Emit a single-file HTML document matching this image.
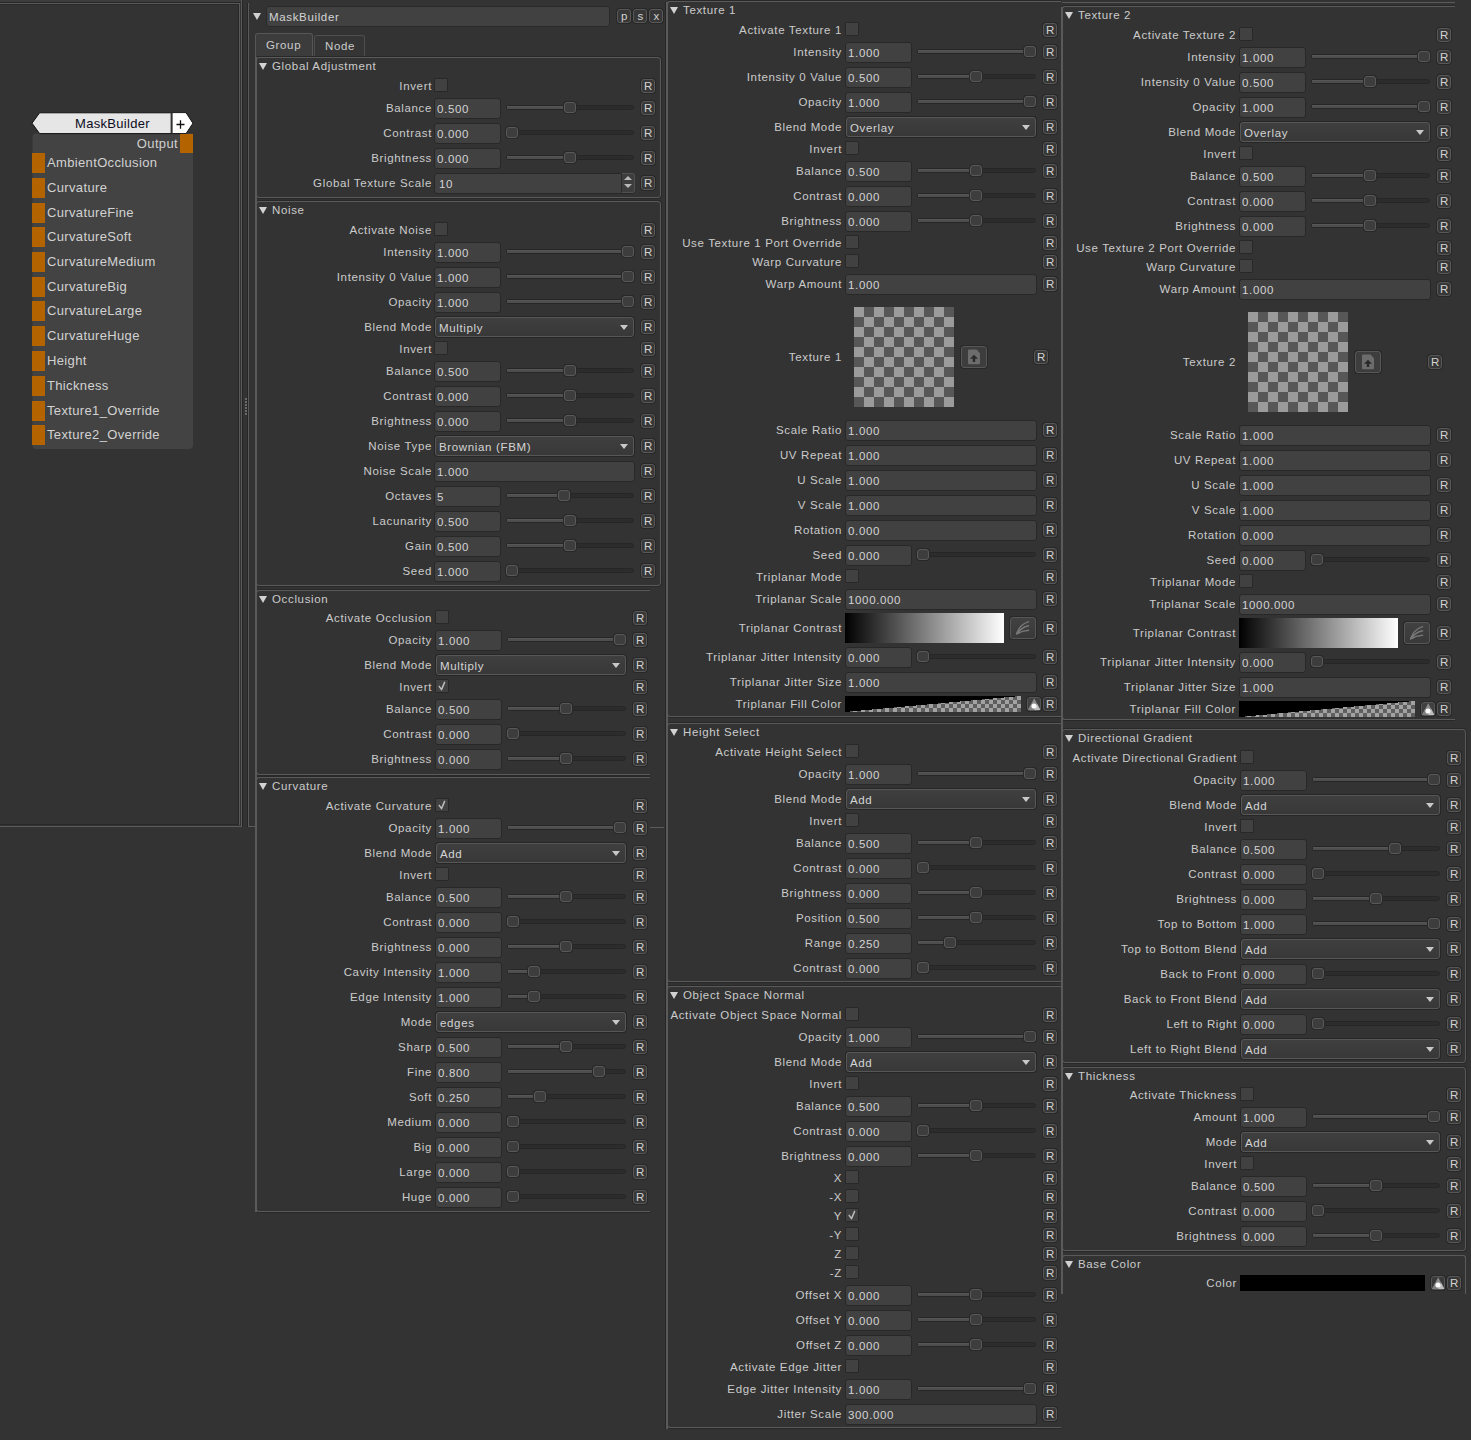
<!DOCTYPE html><html><head><meta charset="utf-8"><style>
*{margin:0;padding:0;box-sizing:border-box}
html,body{width:1471px;height:1440px;overflow:hidden;background:#333333}
body{position:relative;font-family:"Liberation Sans",sans-serif}
body>div{position:absolute}
.a{position:absolute}
.t{position:absolute;font-size:11.5px;line-height:20px;height:20px;letter-spacing:.65px;color:#cbcbcb;white-space:nowrap}
.rb{position:absolute;width:14px;height:14px;border:1px solid #585858;border-radius:3px;background:#373737;box-shadow:0 0 0 1px #282828;font-size:11.5px;line-height:13px;text-align:center;color:#d2d2d2;padding-left:.5px}
.cb{position:absolute;width:14px;height:14px;background:#414141;border:1px solid #282828;border-radius:1px}
.fd{position:absolute;height:21px;background:#414141;border:1px solid #282828;border-radius:3px}
.fd span,.dd span{position:absolute;left:2px;top:0px;font-size:11.5px;line-height:20px;letter-spacing:.65px;color:#d4d4d4;white-space:nowrap}
.dd{position:absolute;height:20px;background:linear-gradient(#3f3f3f,#383838);border:1px solid #575757;border-radius:3px;box-shadow:0 0 0 1px #262626}
.dd span{left:3px;top:0px}
.dd i{position:absolute;right:5px;top:7px;width:0;height:0;border-left:4.5px solid transparent;border-right:4.5px solid transparent;border-top:5px solid #c8c8c8}
.gr{position:absolute;height:5px;background:#2c2c2c;border:1px solid #262626;border-radius:3px}
.gf{position:absolute;height:3px;background:#4e4e4e;border-top:1px solid #565656}
.hd{position:absolute;width:12px;height:11px;background:#3d3d3d;border:1px solid #595959;border-radius:3px;box-shadow:0 0 0 1px #282828}
.gb{position:absolute;border:1px solid #5a5a5a;border-radius:3px;box-shadow:0 0 0 1px #282828}
.tri{position:absolute;width:0;height:0;border-left:4px solid transparent;border-right:4px solid transparent;border-top:7px solid #d2d2d2}
.spn{position:absolute;width:14px;height:20px;border:1px solid #505050;border-left:1px solid #2a2a2a;border-radius:0 3px 3px 0;background:#3d3d3d}
.spn b{position:absolute;left:2px;top:2px;border-left:4px solid transparent;border-right:4px solid transparent;border-bottom:4px solid #b8b8b8}
.spn s{position:absolute;left:2px;top:10px;border-left:4px solid transparent;border-right:4px solid transparent;border-top:4px solid #b8b8b8}
.port{position:absolute;background:#b36400}
</style></head><body>
<div class="a" style="left:0px;top:0px;width:241px;height:3px;background:#3d3d3d"></div>
<div class="a" style="left:0px;top:2px;width:241px;height:1px;background:#262626"></div>
<div class="a" style="left:0px;top:3px;width:240px;height:1px;background:#5a5a5a"></div>
<div class="a" style="left:0px;top:4px;width:239px;height:1px;background:#282828"></div>
<div class="a" style="left:239px;top:3px;width:1px;height:822px;background:#5a5a5a"></div>
<div class="a" style="left:238px;top:4px;width:1px;height:820px;background:#282828"></div>
<div class="a" style="left:0px;top:824px;width:239px;height:1px;background:#282828"></div>
<div class="a" style="left:0px;top:826px;width:242px;height:1px;background:#5a5a5a"></div>
<div class="a" style="left:241px;top:0px;width:1px;height:827px;background:#5a5a5a"></div>
<div class="a" style="left:242px;top:0px;width:1px;height:827px;background:#262626"></div>
<div class="a" style="left:248px;top:3px;width:1px;height:824px;background:#5a5a5a"></div>
<div class="a" style="left:247px;top:3px;width:1px;height:824px;background:#262626"></div>
<div class="a" style="left:248px;top:826px;width:9px;height:1px;background:#5a5a5a"></div>
<div class="a" style="left:245px;top:398px;width:2px;height:2px;background:#6a6a6a"></div>
<div class="a" style="left:245px;top:401px;width:2px;height:2px;background:#6a6a6a"></div>
<div class="a" style="left:245px;top:404px;width:2px;height:2px;background:#6a6a6a"></div>
<div class="a" style="left:245px;top:407px;width:2px;height:2px;background:#6a6a6a"></div>
<div class="a" style="left:245px;top:410px;width:2px;height:2px;background:#6a6a6a"></div>
<div class="a" style="left:245px;top:413px;width:2px;height:2px;background:#6a6a6a"></div>
<svg class="a" style="position:absolute;left:0;top:0" width="240" height="460"><path d="M32.5 137 Q32.5 133.5 36 133.5 L193 133.5 L193 445 Q193 449 189 449 L36 449 Q32.5 449 32.5 445 Z" fill="#434343"/><path d="M32 123.2 L39.6 112.8 L186 112.8 L192.8 123.2 L186 133.6 L39.6 133.6 Z" fill="#e6e6e6" stroke="#111" stroke-width="1"/><path d="M172.5 113.3 L185.7 113.3 L192.2 123.2 L185.7 133.1 L172.5 133.1 Z" fill="#ffffff"/><rect x="170.6" y="113" width="2" height="20.5" fill="#333"/><path d="M176.5 124.5 L184.5 124.5 M180.5 120.3 L180.5 128.7" stroke="#111" stroke-width="1.3"/></svg>
<div class="t" style="left:75px;top:114px;font-size:13px;letter-spacing:0.3px;color:#0c0c1c">MaskBuilder</div>
<div class="port" style="left:180px;top:134px;width:13px;height:19px;"></div>
<div class="t" style="right:1293px;top:134px;font-size:13px;letter-spacing:0.35px;color:#cfcfcf">Output</div>
<div class="port" style="left:32px;top:153px;width:13px;height:20px;"></div>
<div class="t" style="left:47px;top:153px;font-size:13px;letter-spacing:0.35px;color:#d2d2d2">AmbientOcclusion</div>
<div class="port" style="left:32px;top:178px;width:13px;height:20px;"></div>
<div class="t" style="left:47px;top:178px;font-size:13px;letter-spacing:0.35px;color:#d2d2d2">Curvature</div>
<div class="port" style="left:32px;top:203px;width:13px;height:20px;"></div>
<div class="t" style="left:47px;top:203px;font-size:13px;letter-spacing:0.35px;color:#d2d2d2">CurvatureFine</div>
<div class="port" style="left:32px;top:227px;width:13px;height:20px;"></div>
<div class="t" style="left:47px;top:227px;font-size:13px;letter-spacing:0.35px;color:#d2d2d2">CurvatureSoft</div>
<div class="port" style="left:32px;top:252px;width:13px;height:20px;"></div>
<div class="t" style="left:47px;top:252px;font-size:13px;letter-spacing:0.35px;color:#d2d2d2">CurvatureMedium</div>
<div class="port" style="left:32px;top:277px;width:13px;height:20px;"></div>
<div class="t" style="left:47px;top:277px;font-size:13px;letter-spacing:0.35px;color:#d2d2d2">CurvatureBig</div>
<div class="port" style="left:32px;top:301px;width:13px;height:20px;"></div>
<div class="t" style="left:47px;top:301px;font-size:13px;letter-spacing:0.35px;color:#d2d2d2">CurvatureLarge</div>
<div class="port" style="left:32px;top:326px;width:13px;height:20px;"></div>
<div class="t" style="left:47px;top:326px;font-size:13px;letter-spacing:0.35px;color:#d2d2d2">CurvatureHuge</div>
<div class="port" style="left:32px;top:351px;width:13px;height:20px;"></div>
<div class="t" style="left:47px;top:351px;font-size:13px;letter-spacing:0.35px;color:#d2d2d2">Height</div>
<div class="port" style="left:32px;top:376px;width:13px;height:20px;"></div>
<div class="t" style="left:47px;top:376px;font-size:13px;letter-spacing:0.35px;color:#d2d2d2">Thickness</div>
<div class="port" style="left:32px;top:401px;width:13px;height:20px;"></div>
<div class="t" style="left:47px;top:401px;font-size:13px;letter-spacing:0.35px;color:#d2d2d2">Texture1_Override</div>
<div class="port" style="left:32px;top:425px;width:13px;height:20px;"></div>
<div class="t" style="left:47px;top:425px;font-size:13px;letter-spacing:0.35px;color:#d2d2d2">Texture2_Override</div>
<div class="tri" style="left:253px;top:13px"></div>
<div class="fd" style="left:266px;top:6px;width:344px;background:#414141;border-color:#2a2a2a"><span style="left:2px;top:0px">MaskBuilder</span></div>
<div class="rb" style="left:617px;top:9px;line-height:12px">p</div>
<div class="rb" style="left:633px;top:9px;line-height:12px">s</div>
<div class="rb" style="left:649px;top:9px;line-height:12px">x</div>
<div class="a" style="left:255px;top:33px;width:58px;height:24px;background:#3c3c3c;border:1px solid #565656;border-bottom:none;border-radius:3px 3px 0 0"></div>
<div class="a" style="left:314px;top:35px;width:51px;height:21px;background:#353535;border:1px solid #4e4e4e;border-bottom:none;border-radius:3px 3px 0 0"></div>
<div class="t" style="left:266px;top:35px;">Group</div>
<div class="t" style="left:325px;top:36px;">Node</div>
<div class="gb" style="left:256px;top:57px;width:405px;height:141px;"></div>
<div class="tri" style="left:259px;top:63px"></div>
<div class="t" style="left:272px;top:56px;">Global Adjustment</div>
<div class="t" style="right:1039px;top:76px;">Invert</div>
<div class="cb" style="left:434px;top:78px"></div>
<div class="rb" style="left:641px;top:79px">R</div>
<div class="t" style="right:1039px;top:98px;">Balance</div>
<div class="fd" style="left:434px;top:98px;width:67px"><span>0.500</span></div>
<div class="gr" style="left:506px;top:105px;width:128px"></div>
<div class="gf" style="left:507px;top:106px;width:58px"></div>
<div class="hd" style="left:564px;top:102px"></div>
<div class="rb" style="left:641px;top:101px">R</div>
<div class="t" style="right:1039px;top:123px;">Contrast</div>
<div class="fd" style="left:434px;top:123px;width:67px"><span>0.000</span></div>
<div class="gr" style="left:506px;top:130px;width:128px"></div>
<div class="hd" style="left:506px;top:127px"></div>
<div class="rb" style="left:641px;top:126px">R</div>
<div class="t" style="right:1039px;top:148px;">Brightness</div>
<div class="fd" style="left:434px;top:148px;width:67px"><span>0.000</span></div>
<div class="gr" style="left:506px;top:155px;width:128px"></div>
<div class="gf" style="left:507px;top:156px;width:58px"></div>
<div class="hd" style="left:564px;top:152px"></div>
<div class="rb" style="left:641px;top:151px">R</div>
<div class="t" style="right:1039px;top:173px;">Global Texture Scale</div>
<div class="fd" style="left:434px;top:173px;width:201px"><span style="left:4px">10</span></div>
<div class="spn" style="left:621px;top:173px"><b></b><s></s></div>
<div class="rb" style="left:641px;top:176px">R</div>
<div class="gb" style="left:256px;top:201px;width:405px;height:385px;"></div>
<div class="tri" style="left:259px;top:207px"></div>
<div class="t" style="left:272px;top:200px;">Noise</div>
<div class="t" style="right:1039px;top:220px;">Activate Noise</div>
<div class="cb" style="left:434px;top:222px"></div>
<div class="rb" style="left:641px;top:223px">R</div>
<div class="t" style="right:1039px;top:242px;">Intensity</div>
<div class="fd" style="left:434px;top:242px;width:67px"><span>1.000</span></div>
<div class="gr" style="left:506px;top:249px;width:128px"></div>
<div class="gf" style="left:507px;top:250px;width:116px"></div>
<div class="hd" style="left:622px;top:246px"></div>
<div class="rb" style="left:641px;top:245px">R</div>
<div class="t" style="right:1039px;top:267px;">Intensity 0 Value</div>
<div class="fd" style="left:434px;top:267px;width:67px"><span>1.000</span></div>
<div class="gr" style="left:506px;top:274px;width:128px"></div>
<div class="gf" style="left:507px;top:275px;width:116px"></div>
<div class="hd" style="left:622px;top:271px"></div>
<div class="rb" style="left:641px;top:270px">R</div>
<div class="t" style="right:1039px;top:292px;">Opacity</div>
<div class="fd" style="left:434px;top:292px;width:67px"><span>1.000</span></div>
<div class="gr" style="left:506px;top:299px;width:128px"></div>
<div class="gf" style="left:507px;top:300px;width:116px"></div>
<div class="hd" style="left:622px;top:296px"></div>
<div class="rb" style="left:641px;top:295px">R</div>
<div class="t" style="right:1039px;top:317px;">Blend Mode</div>
<div class="dd" style="left:435px;top:317px;width:199px"><span>Multiply</span><i></i></div>
<div class="rb" style="left:641px;top:320px">R</div>
<div class="t" style="right:1039px;top:339px;">Invert</div>
<div class="cb" style="left:434px;top:341px"></div>
<div class="rb" style="left:641px;top:342px">R</div>
<div class="t" style="right:1039px;top:361px;">Balance</div>
<div class="fd" style="left:434px;top:361px;width:67px"><span>0.500</span></div>
<div class="gr" style="left:506px;top:368px;width:128px"></div>
<div class="gf" style="left:507px;top:369px;width:58px"></div>
<div class="hd" style="left:564px;top:365px"></div>
<div class="rb" style="left:641px;top:364px">R</div>
<div class="t" style="right:1039px;top:386px;">Contrast</div>
<div class="fd" style="left:434px;top:386px;width:67px"><span>0.000</span></div>
<div class="gr" style="left:506px;top:393px;width:128px"></div>
<div class="gf" style="left:507px;top:394px;width:58px"></div>
<div class="hd" style="left:564px;top:390px"></div>
<div class="rb" style="left:641px;top:389px">R</div>
<div class="t" style="right:1039px;top:411px;">Brightness</div>
<div class="fd" style="left:434px;top:411px;width:67px"><span>0.000</span></div>
<div class="gr" style="left:506px;top:418px;width:128px"></div>
<div class="gf" style="left:507px;top:419px;width:58px"></div>
<div class="hd" style="left:564px;top:415px"></div>
<div class="rb" style="left:641px;top:414px">R</div>
<div class="t" style="right:1039px;top:436px;">Noise Type</div>
<div class="dd" style="left:435px;top:436px;width:199px"><span>Brownian (FBM)</span><i></i></div>
<div class="rb" style="left:641px;top:439px">R</div>
<div class="t" style="right:1039px;top:461px;">Noise Scale</div>
<div class="fd" style="left:434px;top:461px;width:201px"><span>1.000</span></div>
<div class="rb" style="left:641px;top:464px">R</div>
<div class="t" style="right:1039px;top:486px;">Octaves</div>
<div class="fd" style="left:434px;top:486px;width:67px"><span>5</span></div>
<div class="gr" style="left:506px;top:493px;width:128px"></div>
<div class="gf" style="left:507px;top:494px;width:52px"></div>
<div class="hd" style="left:558px;top:490px"></div>
<div class="rb" style="left:641px;top:489px">R</div>
<div class="t" style="right:1039px;top:511px;">Lacunarity</div>
<div class="fd" style="left:434px;top:511px;width:67px"><span>0.500</span></div>
<div class="gr" style="left:506px;top:518px;width:128px"></div>
<div class="gf" style="left:507px;top:519px;width:58px"></div>
<div class="hd" style="left:564px;top:515px"></div>
<div class="rb" style="left:641px;top:514px">R</div>
<div class="t" style="right:1039px;top:536px;">Gain</div>
<div class="fd" style="left:434px;top:536px;width:67px"><span>0.500</span></div>
<div class="gr" style="left:506px;top:543px;width:128px"></div>
<div class="gf" style="left:507px;top:544px;width:58px"></div>
<div class="hd" style="left:564px;top:540px"></div>
<div class="rb" style="left:641px;top:539px">R</div>
<div class="t" style="right:1039px;top:561px;">Seed</div>
<div class="fd" style="left:434px;top:561px;width:67px"><span>1.000</span></div>
<div class="gr" style="left:506px;top:568px;width:128px"></div>
<div class="hd" style="left:506px;top:565px"></div>
<div class="rb" style="left:641px;top:564px">R</div>
<div class="gb" style="left:256px;top:590px;width:394px;height:185px;border-right:none;border-top-right-radius:0;border-bottom-right-radius:0;box-shadow:-1px 0 0 0 #282828,0 -1px 0 0 #282828,0 1px 0 0 #282828;"></div>
<div class="tri" style="left:259px;top:596px"></div>
<div class="t" style="left:272px;top:589px;">Occlusion</div>
<div class="t" style="right:1039px;top:608px;">Activate Occlusion</div>
<div class="cb" style="left:435px;top:610px"></div>
<div class="rb" style="left:633px;top:611px">R</div>
<div class="t" style="right:1039px;top:630px;">Opacity</div>
<div class="fd" style="left:435px;top:630px;width:67px"><span>1.000</span></div>
<div class="gr" style="left:507px;top:637px;width:119px"></div>
<div class="gf" style="left:508px;top:638px;width:107px"></div>
<div class="hd" style="left:614px;top:634px"></div>
<div class="rb" style="left:633px;top:633px">R</div>
<div class="t" style="right:1039px;top:655px;">Blend Mode</div>
<div class="dd" style="left:436px;top:655px;width:190px"><span>Multiply</span><i></i></div>
<div class="rb" style="left:633px;top:658px">R</div>
<div class="t" style="right:1039px;top:677px;">Invert</div>
<div class="cb" style="left:435px;top:679px"><svg width="12" height="12" style="position:absolute;left:0px;top:0px"><path d="M3.2 6.4 L5.5 9.6 L8.6 2.4" stroke="#bcbcbc" stroke-width="1.5" fill="none" stroke-linecap="round" stroke-linejoin="round"/></svg></div>
<div class="rb" style="left:633px;top:680px">R</div>
<div class="t" style="right:1039px;top:699px;">Balance</div>
<div class="fd" style="left:435px;top:699px;width:67px"><span>0.500</span></div>
<div class="gr" style="left:507px;top:706px;width:119px"></div>
<div class="gf" style="left:508px;top:707px;width:53px"></div>
<div class="hd" style="left:560px;top:703px"></div>
<div class="rb" style="left:633px;top:702px">R</div>
<div class="t" style="right:1039px;top:724px;">Contrast</div>
<div class="fd" style="left:435px;top:724px;width:67px"><span>0.000</span></div>
<div class="gr" style="left:507px;top:731px;width:119px"></div>
<div class="hd" style="left:507px;top:728px"></div>
<div class="rb" style="left:633px;top:727px">R</div>
<div class="t" style="right:1039px;top:749px;">Brightness</div>
<div class="fd" style="left:435px;top:749px;width:67px"><span>0.000</span></div>
<div class="gr" style="left:507px;top:756px;width:119px"></div>
<div class="gf" style="left:508px;top:757px;width:53px"></div>
<div class="hd" style="left:560px;top:753px"></div>
<div class="rb" style="left:633px;top:752px">R</div>
<div class="gb" style="left:256px;top:777px;width:394px;height:435px;border-right:none;border-top-right-radius:0;border-bottom-right-radius:0;box-shadow:-1px 0 0 0 #282828,0 -1px 0 0 #282828,0 1px 0 0 #282828;"></div>
<div class="tri" style="left:259px;top:783px"></div>
<div class="t" style="left:272px;top:776px;">Curvature</div>
<div class="t" style="right:1039px;top:796px;">Activate Curvature</div>
<div class="cb" style="left:435px;top:798px"><svg width="12" height="12" style="position:absolute;left:0px;top:0px"><path d="M3.2 6.4 L5.5 9.6 L8.6 2.4" stroke="#bcbcbc" stroke-width="1.5" fill="none" stroke-linecap="round" stroke-linejoin="round"/></svg></div>
<div class="rb" style="left:633px;top:799px">R</div>
<div class="t" style="right:1039px;top:818px;">Opacity</div>
<div class="fd" style="left:435px;top:818px;width:67px"><span>1.000</span></div>
<div class="gr" style="left:507px;top:825px;width:119px"></div>
<div class="gf" style="left:508px;top:826px;width:107px"></div>
<div class="hd" style="left:614px;top:822px"></div>
<div class="rb" style="left:633px;top:821px">R</div>
<div class="t" style="right:1039px;top:843px;">Blend Mode</div>
<div class="dd" style="left:436px;top:843px;width:190px"><span>Add</span><i></i></div>
<div class="rb" style="left:633px;top:846px">R</div>
<div class="t" style="right:1039px;top:865px;">Invert</div>
<div class="cb" style="left:435px;top:867px"></div>
<div class="rb" style="left:633px;top:868px">R</div>
<div class="t" style="right:1039px;top:887px;">Balance</div>
<div class="fd" style="left:435px;top:887px;width:67px"><span>0.500</span></div>
<div class="gr" style="left:507px;top:894px;width:119px"></div>
<div class="gf" style="left:508px;top:895px;width:53px"></div>
<div class="hd" style="left:560px;top:891px"></div>
<div class="rb" style="left:633px;top:890px">R</div>
<div class="t" style="right:1039px;top:912px;">Contrast</div>
<div class="fd" style="left:435px;top:912px;width:67px"><span>0.000</span></div>
<div class="gr" style="left:507px;top:919px;width:119px"></div>
<div class="hd" style="left:507px;top:916px"></div>
<div class="rb" style="left:633px;top:915px">R</div>
<div class="t" style="right:1039px;top:937px;">Brightness</div>
<div class="fd" style="left:435px;top:937px;width:67px"><span>0.000</span></div>
<div class="gr" style="left:507px;top:944px;width:119px"></div>
<div class="gf" style="left:508px;top:945px;width:53px"></div>
<div class="hd" style="left:560px;top:941px"></div>
<div class="rb" style="left:633px;top:940px">R</div>
<div class="t" style="right:1039px;top:962px;">Cavity Intensity</div>
<div class="fd" style="left:435px;top:962px;width:67px"><span>1.000</span></div>
<div class="gr" style="left:507px;top:969px;width:119px"></div>
<div class="gf" style="left:508px;top:970px;width:21px"></div>
<div class="hd" style="left:528px;top:966px"></div>
<div class="rb" style="left:633px;top:965px">R</div>
<div class="t" style="right:1039px;top:987px;">Edge Intensity</div>
<div class="fd" style="left:435px;top:987px;width:67px"><span>1.000</span></div>
<div class="gr" style="left:507px;top:994px;width:119px"></div>
<div class="gf" style="left:508px;top:995px;width:21px"></div>
<div class="hd" style="left:528px;top:991px"></div>
<div class="rb" style="left:633px;top:990px">R</div>
<div class="t" style="right:1039px;top:1012px;">Mode</div>
<div class="dd" style="left:436px;top:1012px;width:190px"><span>edges</span><i></i></div>
<div class="rb" style="left:633px;top:1015px">R</div>
<div class="t" style="right:1039px;top:1037px;">Sharp</div>
<div class="fd" style="left:435px;top:1037px;width:67px"><span>0.500</span></div>
<div class="gr" style="left:507px;top:1044px;width:119px"></div>
<div class="gf" style="left:508px;top:1045px;width:53px"></div>
<div class="hd" style="left:560px;top:1041px"></div>
<div class="rb" style="left:633px;top:1040px">R</div>
<div class="t" style="right:1039px;top:1062px;">Fine</div>
<div class="fd" style="left:435px;top:1062px;width:67px"><span>0.800</span></div>
<div class="gr" style="left:507px;top:1069px;width:119px"></div>
<div class="gf" style="left:508px;top:1070px;width:86px"></div>
<div class="hd" style="left:593px;top:1066px"></div>
<div class="rb" style="left:633px;top:1065px">R</div>
<div class="t" style="right:1039px;top:1087px;">Soft</div>
<div class="fd" style="left:435px;top:1087px;width:67px"><span>0.250</span></div>
<div class="gr" style="left:507px;top:1094px;width:119px"></div>
<div class="gf" style="left:508px;top:1095px;width:27px"></div>
<div class="hd" style="left:534px;top:1091px"></div>
<div class="rb" style="left:633px;top:1090px">R</div>
<div class="t" style="right:1039px;top:1112px;">Medium</div>
<div class="fd" style="left:435px;top:1112px;width:67px"><span>0.000</span></div>
<div class="gr" style="left:507px;top:1119px;width:119px"></div>
<div class="hd" style="left:507px;top:1116px"></div>
<div class="rb" style="left:633px;top:1115px">R</div>
<div class="t" style="right:1039px;top:1137px;">Big</div>
<div class="fd" style="left:435px;top:1137px;width:67px"><span>0.000</span></div>
<div class="gr" style="left:507px;top:1144px;width:119px"></div>
<div class="hd" style="left:507px;top:1141px"></div>
<div class="rb" style="left:633px;top:1140px">R</div>
<div class="t" style="right:1039px;top:1162px;">Large</div>
<div class="fd" style="left:435px;top:1162px;width:67px"><span>0.000</span></div>
<div class="gr" style="left:507px;top:1169px;width:119px"></div>
<div class="hd" style="left:507px;top:1166px"></div>
<div class="rb" style="left:633px;top:1165px">R</div>
<div class="t" style="right:1039px;top:1187px;">Huge</div>
<div class="fd" style="left:435px;top:1187px;width:67px"><span>0.000</span></div>
<div class="gr" style="left:507px;top:1194px;width:119px"></div>
<div class="hd" style="left:507px;top:1191px"></div>
<div class="rb" style="left:633px;top:1190px">R</div>
<div class="a" style="left:650px;top:827px;width:14px;height:1px;background:#5a5a5a"></div>
<div class="gb" style="left:667px;top:1px;width:394px;height:716px;border-right:none;border-top-right-radius:0;border-bottom-right-radius:0;box-shadow:-1px 0 0 0 #282828,0 -1px 0 0 #282828,0 1px 0 0 #282828;"></div>
<div class="tri" style="left:670px;top:7px"></div>
<div class="t" style="left:683px;top:0px;">Texture 1</div>
<div class="t" style="right:629px;top:20px;">Activate Texture 1</div>
<div class="cb" style="left:845px;top:22px"></div>
<div class="rb" style="left:1043px;top:23px">R</div>
<div class="t" style="right:629px;top:42px;">Intensity</div>
<div class="fd" style="left:845px;top:42px;width:67px"><span>1.000</span></div>
<div class="gr" style="left:917px;top:49px;width:119px"></div>
<div class="gf" style="left:918px;top:50px;width:107px"></div>
<div class="hd" style="left:1024px;top:46px"></div>
<div class="rb" style="left:1043px;top:45px">R</div>
<div class="t" style="right:629px;top:67px;">Intensity 0 Value</div>
<div class="fd" style="left:845px;top:67px;width:67px"><span>0.500</span></div>
<div class="gr" style="left:917px;top:74px;width:119px"></div>
<div class="gf" style="left:918px;top:75px;width:53px"></div>
<div class="hd" style="left:970px;top:71px"></div>
<div class="rb" style="left:1043px;top:70px">R</div>
<div class="t" style="right:629px;top:92px;">Opacity</div>
<div class="fd" style="left:845px;top:92px;width:67px"><span>1.000</span></div>
<div class="gr" style="left:917px;top:99px;width:119px"></div>
<div class="gf" style="left:918px;top:100px;width:107px"></div>
<div class="hd" style="left:1024px;top:96px"></div>
<div class="rb" style="left:1043px;top:95px">R</div>
<div class="t" style="right:629px;top:117px;">Blend Mode</div>
<div class="dd" style="left:846px;top:117px;width:190px"><span>Overlay</span><i></i></div>
<div class="rb" style="left:1043px;top:120px">R</div>
<div class="t" style="right:629px;top:139px;">Invert</div>
<div class="cb" style="left:845px;top:141px"></div>
<div class="rb" style="left:1043px;top:142px">R</div>
<div class="t" style="right:629px;top:161px;">Balance</div>
<div class="fd" style="left:845px;top:161px;width:67px"><span>0.500</span></div>
<div class="gr" style="left:917px;top:168px;width:119px"></div>
<div class="gf" style="left:918px;top:169px;width:53px"></div>
<div class="hd" style="left:970px;top:165px"></div>
<div class="rb" style="left:1043px;top:164px">R</div>
<div class="t" style="right:629px;top:186px;">Contrast</div>
<div class="fd" style="left:845px;top:186px;width:67px"><span>0.000</span></div>
<div class="gr" style="left:917px;top:193px;width:119px"></div>
<div class="gf" style="left:918px;top:194px;width:53px"></div>
<div class="hd" style="left:970px;top:190px"></div>
<div class="rb" style="left:1043px;top:189px">R</div>
<div class="t" style="right:629px;top:211px;">Brightness</div>
<div class="fd" style="left:845px;top:211px;width:67px"><span>0.000</span></div>
<div class="gr" style="left:917px;top:218px;width:119px"></div>
<div class="gf" style="left:918px;top:219px;width:53px"></div>
<div class="hd" style="left:970px;top:215px"></div>
<div class="rb" style="left:1043px;top:214px">R</div>
<div class="t" style="right:629px;top:233px;">Use Texture 1 Port Override</div>
<div class="cb" style="left:845px;top:235px"></div>
<div class="rb" style="left:1043px;top:236px">R</div>
<div class="t" style="right:629px;top:252px;">Warp Curvature</div>
<div class="cb" style="left:845px;top:254px"></div>
<div class="rb" style="left:1043px;top:255px">R</div>
<div class="t" style="right:629px;top:274px;">Warp Amount</div>
<div class="fd" style="left:845px;top:274px;width:192px"><span>1.000</span></div>
<div class="rb" style="left:1043px;top:277px">R</div>
<div class="a" style="left:854px;top:307px;width:100px;height:100px;background:conic-gradient(#575757 25%,#9b9b9b 0 50%,#575757 0 75%,#9b9b9b 0) 0 0/20px 20px"></div>
<div class="t" style="right:629px;top:347px;">Texture 1</div>
<div class="a" style="left:961px;top:346px;width:26px;height:22px;background:#3d3d3d;border:1px solid #575757;border-radius:3px;box-shadow:0 0 0 1px #282828"><svg width="24" height="20" style="position:absolute;left:0;top:0"><path d="M7 2.6 L14.6 2.6 L18 6.2 L18 16.2 Q18 17.2 17 17.2 L7 17.2 Q6 17.2 6 16.2 L6 3.6 Q6 2.6 7 2.6 Z" fill="#6c6c6c"/><path d="M12 7.8 L8 11.8 L10.8 11.8 L10.8 15 L13.2 15 L13.2 11.8 L16 11.8 Z" fill="#2a2a2a"/></svg></div>
<div class="rb" style="left:1034px;top:350px">R</div>
<div class="t" style="right:629px;top:420px;">Scale Ratio</div>
<div class="fd" style="left:845px;top:420px;width:192px"><span>1.000</span></div>
<div class="rb" style="left:1043px;top:423px">R</div>
<div class="t" style="right:629px;top:445px;">UV Repeat</div>
<div class="fd" style="left:845px;top:445px;width:192px"><span>1.000</span></div>
<div class="rb" style="left:1043px;top:448px">R</div>
<div class="t" style="right:629px;top:470px;">U Scale</div>
<div class="fd" style="left:845px;top:470px;width:192px"><span>1.000</span></div>
<div class="rb" style="left:1043px;top:473px">R</div>
<div class="t" style="right:629px;top:495px;">V Scale</div>
<div class="fd" style="left:845px;top:495px;width:192px"><span>1.000</span></div>
<div class="rb" style="left:1043px;top:498px">R</div>
<div class="t" style="right:629px;top:520px;">Rotation</div>
<div class="fd" style="left:845px;top:520px;width:192px"><span>0.000</span></div>
<div class="rb" style="left:1043px;top:523px">R</div>
<div class="t" style="right:629px;top:545px;">Seed</div>
<div class="fd" style="left:845px;top:545px;width:67px"><span>0.000</span></div>
<div class="gr" style="left:917px;top:552px;width:119px"></div>
<div class="hd" style="left:917px;top:549px"></div>
<div class="rb" style="left:1043px;top:548px">R</div>
<div class="t" style="right:629px;top:567px;">Triplanar Mode</div>
<div class="cb" style="left:845px;top:569px"></div>
<div class="rb" style="left:1043px;top:570px">R</div>
<div class="t" style="right:629px;top:589px;">Triplanar Scale</div>
<div class="fd" style="left:845px;top:589px;width:192px"><span>1000.000</span></div>
<div class="rb" style="left:1043px;top:592px">R</div>
<div class="t" style="right:629px;top:618px;">Triplanar Contrast</div>
<div class="a" style="left:845px;top:613px;width:159px;height:30px;background:linear-gradient(to right,#000 0%,#fff 100%)"></div>
<div class="a" style="left:1010px;top:617px;width:26px;height:22px;background:linear-gradient(#414141,#393939);border:1px solid #575757;border-radius:3px;box-shadow:0 0 0 1px #282828"><svg width="24" height="20" style="position:absolute;left:0;top:0"><path d="M5.6 16 Q8.5 6.5 17.6 3.6 M5.6 16 Q10.5 9.2 17.6 7.8 M5.6 16 Q11 12.6 17.6 12.2" stroke="#777" stroke-width="1.4" fill="none" stroke-linecap="round"/><path d="M4.8 16.6 L6.2 13 L8.6 15.4 Z" fill="#777"/></svg></div>
<div class="rb" style="left:1043px;top:621px">R</div>
<div class="t" style="right:629px;top:647px;">Triplanar Jitter Intensity</div>
<div class="fd" style="left:845px;top:647px;width:67px"><span>0.000</span></div>
<div class="gr" style="left:917px;top:654px;width:119px"></div>
<div class="hd" style="left:917px;top:651px"></div>
<div class="rb" style="left:1043px;top:650px">R</div>
<div class="t" style="right:629px;top:672px;">Triplanar Jitter Size</div>
<div class="fd" style="left:845px;top:672px;width:192px"><span>1.000</span></div>
<div class="rb" style="left:1043px;top:675px">R</div>
<div class="t" style="right:629px;top:694px;">Triplanar Fill Color</div>
<svg class="a" style="position:absolute;left:845px;top:696px" width="176" height="16"><defs><pattern id="ck1" x="4" width="8" height="8" patternUnits="userSpaceOnUse"><rect width="8" height="8" fill="#5e5e5e"/><rect width="4" height="4" fill="#a2a2a2"/><rect x="4" y="4" width="4" height="4" fill="#a2a2a2"/></pattern></defs><rect width="176" height="16" fill="#000"/><path d="M0 16 L176 0 L176 16 Z" fill="url(#ck1)" shape-rendering="crispEdges"/></svg>
<div class="a" style="left:1027px;top:697px;width:14px;height:14px;background:#404040;border:1px solid #575757;border-radius:3px;box-shadow:0 0 0 1px #282828"><svg width="14" height="14" style="position:absolute;left:-1px;top:-1px"><path d="M7.2 1.2 L13.4 13 L1 13 Z" fill="#8c8c8c"/><path d="M4.1 7.1 L1 13 L7.2 13 Z" fill="#808080"/><path d="M10.3 7.1 L13.4 13 L7.2 13 Z" fill="#bdbdbd"/><circle cx="7" cy="9" r="2.6" fill="#fafafa"/></svg></div>
<div class="rb" style="left:1043px;top:697px">R</div>
<div class="gb" style="left:667px;top:723px;width:394px;height:259px;border-right:none;border-top-right-radius:0;border-bottom-right-radius:0;box-shadow:-1px 0 0 0 #282828,0 -1px 0 0 #282828,0 1px 0 0 #282828;"></div>
<div class="tri" style="left:670px;top:729px"></div>
<div class="t" style="left:683px;top:722px;">Height Select</div>
<div class="t" style="right:629px;top:742px;">Activate Height Select</div>
<div class="cb" style="left:845px;top:744px"></div>
<div class="rb" style="left:1043px;top:745px">R</div>
<div class="t" style="right:629px;top:764px;">Opacity</div>
<div class="fd" style="left:845px;top:764px;width:67px"><span>1.000</span></div>
<div class="gr" style="left:917px;top:771px;width:119px"></div>
<div class="gf" style="left:918px;top:772px;width:107px"></div>
<div class="hd" style="left:1024px;top:768px"></div>
<div class="rb" style="left:1043px;top:767px">R</div>
<div class="t" style="right:629px;top:789px;">Blend Mode</div>
<div class="dd" style="left:846px;top:789px;width:190px"><span>Add</span><i></i></div>
<div class="rb" style="left:1043px;top:792px">R</div>
<div class="t" style="right:629px;top:811px;">Invert</div>
<div class="cb" style="left:845px;top:813px"></div>
<div class="rb" style="left:1043px;top:814px">R</div>
<div class="t" style="right:629px;top:833px;">Balance</div>
<div class="fd" style="left:845px;top:833px;width:67px"><span>0.500</span></div>
<div class="gr" style="left:917px;top:840px;width:119px"></div>
<div class="gf" style="left:918px;top:841px;width:53px"></div>
<div class="hd" style="left:970px;top:837px"></div>
<div class="rb" style="left:1043px;top:836px">R</div>
<div class="t" style="right:629px;top:858px;">Contrast</div>
<div class="fd" style="left:845px;top:858px;width:67px"><span>0.000</span></div>
<div class="gr" style="left:917px;top:865px;width:119px"></div>
<div class="hd" style="left:917px;top:862px"></div>
<div class="rb" style="left:1043px;top:861px">R</div>
<div class="t" style="right:629px;top:883px;">Brightness</div>
<div class="fd" style="left:845px;top:883px;width:67px"><span>0.000</span></div>
<div class="gr" style="left:917px;top:890px;width:119px"></div>
<div class="gf" style="left:918px;top:891px;width:53px"></div>
<div class="hd" style="left:970px;top:887px"></div>
<div class="rb" style="left:1043px;top:886px">R</div>
<div class="t" style="right:629px;top:908px;">Position</div>
<div class="fd" style="left:845px;top:908px;width:67px"><span>0.500</span></div>
<div class="gr" style="left:917px;top:915px;width:119px"></div>
<div class="gf" style="left:918px;top:916px;width:53px"></div>
<div class="hd" style="left:970px;top:912px"></div>
<div class="rb" style="left:1043px;top:911px">R</div>
<div class="t" style="right:629px;top:933px;">Range</div>
<div class="fd" style="left:845px;top:933px;width:67px"><span>0.250</span></div>
<div class="gr" style="left:917px;top:940px;width:119px"></div>
<div class="gf" style="left:918px;top:941px;width:27px"></div>
<div class="hd" style="left:944px;top:937px"></div>
<div class="rb" style="left:1043px;top:936px">R</div>
<div class="t" style="right:629px;top:958px;">Contrast</div>
<div class="fd" style="left:845px;top:958px;width:67px"><span>0.000</span></div>
<div class="gr" style="left:917px;top:965px;width:119px"></div>
<div class="hd" style="left:917px;top:962px"></div>
<div class="rb" style="left:1043px;top:961px">R</div>
<div class="gb" style="left:667px;top:986px;width:394px;height:442px;border-right:none;border-top-right-radius:0;border-bottom-right-radius:0;box-shadow:-1px 0 0 0 #282828,0 -1px 0 0 #282828,0 1px 0 0 #282828;"></div>
<div class="tri" style="left:670px;top:992px"></div>
<div class="t" style="left:683px;top:985px;">Object Space Normal</div>
<div class="t" style="right:629px;top:1005px;">Activate Object Space Normal</div>
<div class="cb" style="left:845px;top:1007px"></div>
<div class="rb" style="left:1043px;top:1008px">R</div>
<div class="t" style="right:629px;top:1027px;">Opacity</div>
<div class="fd" style="left:845px;top:1027px;width:67px"><span>1.000</span></div>
<div class="gr" style="left:917px;top:1034px;width:119px"></div>
<div class="gf" style="left:918px;top:1035px;width:107px"></div>
<div class="hd" style="left:1024px;top:1031px"></div>
<div class="rb" style="left:1043px;top:1030px">R</div>
<div class="t" style="right:629px;top:1052px;">Blend Mode</div>
<div class="dd" style="left:846px;top:1052px;width:190px"><span>Add</span><i></i></div>
<div class="rb" style="left:1043px;top:1055px">R</div>
<div class="t" style="right:629px;top:1074px;">Invert</div>
<div class="cb" style="left:845px;top:1076px"></div>
<div class="rb" style="left:1043px;top:1077px">R</div>
<div class="t" style="right:629px;top:1096px;">Balance</div>
<div class="fd" style="left:845px;top:1096px;width:67px"><span>0.500</span></div>
<div class="gr" style="left:917px;top:1103px;width:119px"></div>
<div class="gf" style="left:918px;top:1104px;width:53px"></div>
<div class="hd" style="left:970px;top:1100px"></div>
<div class="rb" style="left:1043px;top:1099px">R</div>
<div class="t" style="right:629px;top:1121px;">Contrast</div>
<div class="fd" style="left:845px;top:1121px;width:67px"><span>0.000</span></div>
<div class="gr" style="left:917px;top:1128px;width:119px"></div>
<div class="hd" style="left:917px;top:1125px"></div>
<div class="rb" style="left:1043px;top:1124px">R</div>
<div class="t" style="right:629px;top:1146px;">Brightness</div>
<div class="fd" style="left:845px;top:1146px;width:67px"><span>0.000</span></div>
<div class="gr" style="left:917px;top:1153px;width:119px"></div>
<div class="gf" style="left:918px;top:1154px;width:53px"></div>
<div class="hd" style="left:970px;top:1150px"></div>
<div class="rb" style="left:1043px;top:1149px">R</div>
<div class="t" style="right:629px;top:1168px;">X</div>
<div class="cb" style="left:845px;top:1170px"></div>
<div class="rb" style="left:1043px;top:1171px">R</div>
<div class="t" style="right:629px;top:1187px;">-X</div>
<div class="cb" style="left:845px;top:1189px"></div>
<div class="rb" style="left:1043px;top:1190px">R</div>
<div class="t" style="right:629px;top:1206px;">Y</div>
<div class="cb" style="left:845px;top:1208px"><svg width="12" height="12" style="position:absolute;left:0px;top:0px"><path d="M3.2 6.4 L5.5 9.6 L8.6 2.4" stroke="#bcbcbc" stroke-width="1.5" fill="none" stroke-linecap="round" stroke-linejoin="round"/></svg></div>
<div class="rb" style="left:1043px;top:1209px">R</div>
<div class="t" style="right:629px;top:1225px;">-Y</div>
<div class="cb" style="left:845px;top:1227px"></div>
<div class="rb" style="left:1043px;top:1228px">R</div>
<div class="t" style="right:629px;top:1244px;">Z</div>
<div class="cb" style="left:845px;top:1246px"></div>
<div class="rb" style="left:1043px;top:1247px">R</div>
<div class="t" style="right:629px;top:1263px;">-Z</div>
<div class="cb" style="left:845px;top:1265px"></div>
<div class="rb" style="left:1043px;top:1266px">R</div>
<div class="t" style="right:629px;top:1285px;">Offset X</div>
<div class="fd" style="left:845px;top:1285px;width:67px"><span>0.000</span></div>
<div class="gr" style="left:917px;top:1292px;width:119px"></div>
<div class="gf" style="left:918px;top:1293px;width:53px"></div>
<div class="hd" style="left:970px;top:1289px"></div>
<div class="rb" style="left:1043px;top:1288px">R</div>
<div class="t" style="right:629px;top:1310px;">Offset Y</div>
<div class="fd" style="left:845px;top:1310px;width:67px"><span>0.000</span></div>
<div class="gr" style="left:917px;top:1317px;width:119px"></div>
<div class="gf" style="left:918px;top:1318px;width:53px"></div>
<div class="hd" style="left:970px;top:1314px"></div>
<div class="rb" style="left:1043px;top:1313px">R</div>
<div class="t" style="right:629px;top:1335px;">Offset Z</div>
<div class="fd" style="left:845px;top:1335px;width:67px"><span>0.000</span></div>
<div class="gr" style="left:917px;top:1342px;width:119px"></div>
<div class="gf" style="left:918px;top:1343px;width:53px"></div>
<div class="hd" style="left:970px;top:1339px"></div>
<div class="rb" style="left:1043px;top:1338px">R</div>
<div class="t" style="right:629px;top:1357px;">Activate Edge Jitter</div>
<div class="cb" style="left:845px;top:1359px"></div>
<div class="rb" style="left:1043px;top:1360px">R</div>
<div class="t" style="right:629px;top:1379px;">Edge Jitter Intensity</div>
<div class="fd" style="left:845px;top:1379px;width:67px"><span>1.000</span></div>
<div class="gr" style="left:917px;top:1386px;width:119px"></div>
<div class="gf" style="left:918px;top:1387px;width:107px"></div>
<div class="hd" style="left:1024px;top:1383px"></div>
<div class="rb" style="left:1043px;top:1382px">R</div>
<div class="t" style="right:629px;top:1404px;">Jitter Scale</div>
<div class="fd" style="left:845px;top:1404px;width:192px"><span>300.000</span></div>
<div class="rb" style="left:1043px;top:1407px">R</div>
<div class="gb" style="left:1062px;top:6px;width:393px;height:714px;border-right:none;border-top-right-radius:0;border-bottom-right-radius:0;box-shadow:-1px 0 0 0 #282828,0 -1px 0 0 #282828,0 1px 0 0 #282828;"></div>
<div class="tri" style="left:1065px;top:12px"></div>
<div class="t" style="left:1078px;top:5px;">Texture 2</div>
<div class="t" style="right:235px;top:25px;">Activate Texture 2</div>
<div class="cb" style="left:1239px;top:27px"></div>
<div class="rb" style="left:1437px;top:28px">R</div>
<div class="t" style="right:235px;top:47px;">Intensity</div>
<div class="fd" style="left:1239px;top:47px;width:67px"><span>1.000</span></div>
<div class="gr" style="left:1311px;top:54px;width:119px"></div>
<div class="gf" style="left:1312px;top:55px;width:107px"></div>
<div class="hd" style="left:1418px;top:51px"></div>
<div class="rb" style="left:1437px;top:50px">R</div>
<div class="t" style="right:235px;top:72px;">Intensity 0 Value</div>
<div class="fd" style="left:1239px;top:72px;width:67px"><span>0.500</span></div>
<div class="gr" style="left:1311px;top:79px;width:119px"></div>
<div class="gf" style="left:1312px;top:80px;width:53px"></div>
<div class="hd" style="left:1364px;top:76px"></div>
<div class="rb" style="left:1437px;top:75px">R</div>
<div class="t" style="right:235px;top:97px;">Opacity</div>
<div class="fd" style="left:1239px;top:97px;width:67px"><span>1.000</span></div>
<div class="gr" style="left:1311px;top:104px;width:119px"></div>
<div class="gf" style="left:1312px;top:105px;width:107px"></div>
<div class="hd" style="left:1418px;top:101px"></div>
<div class="rb" style="left:1437px;top:100px">R</div>
<div class="t" style="right:235px;top:122px;">Blend Mode</div>
<div class="dd" style="left:1240px;top:122px;width:190px"><span>Overlay</span><i></i></div>
<div class="rb" style="left:1437px;top:125px">R</div>
<div class="t" style="right:235px;top:144px;">Invert</div>
<div class="cb" style="left:1239px;top:146px"></div>
<div class="rb" style="left:1437px;top:147px">R</div>
<div class="t" style="right:235px;top:166px;">Balance</div>
<div class="fd" style="left:1239px;top:166px;width:67px"><span>0.500</span></div>
<div class="gr" style="left:1311px;top:173px;width:119px"></div>
<div class="gf" style="left:1312px;top:174px;width:53px"></div>
<div class="hd" style="left:1364px;top:170px"></div>
<div class="rb" style="left:1437px;top:169px">R</div>
<div class="t" style="right:235px;top:191px;">Contrast</div>
<div class="fd" style="left:1239px;top:191px;width:67px"><span>0.000</span></div>
<div class="gr" style="left:1311px;top:198px;width:119px"></div>
<div class="gf" style="left:1312px;top:199px;width:53px"></div>
<div class="hd" style="left:1364px;top:195px"></div>
<div class="rb" style="left:1437px;top:194px">R</div>
<div class="t" style="right:235px;top:216px;">Brightness</div>
<div class="fd" style="left:1239px;top:216px;width:67px"><span>0.000</span></div>
<div class="gr" style="left:1311px;top:223px;width:119px"></div>
<div class="gf" style="left:1312px;top:224px;width:53px"></div>
<div class="hd" style="left:1364px;top:220px"></div>
<div class="rb" style="left:1437px;top:219px">R</div>
<div class="t" style="right:235px;top:238px;">Use Texture 2 Port Override</div>
<div class="cb" style="left:1239px;top:240px"></div>
<div class="rb" style="left:1437px;top:241px">R</div>
<div class="t" style="right:235px;top:257px;">Warp Curvature</div>
<div class="cb" style="left:1239px;top:259px"></div>
<div class="rb" style="left:1437px;top:260px">R</div>
<div class="t" style="right:235px;top:279px;">Warp Amount</div>
<div class="fd" style="left:1239px;top:279px;width:192px"><span>1.000</span></div>
<div class="rb" style="left:1437px;top:282px">R</div>
<div class="a" style="left:1248px;top:312px;width:100px;height:100px;background:conic-gradient(#575757 25%,#9b9b9b 0 50%,#575757 0 75%,#9b9b9b 0) 0 0/20px 20px"></div>
<div class="t" style="right:235px;top:352px;">Texture 2</div>
<div class="a" style="left:1355px;top:351px;width:26px;height:22px;background:#3d3d3d;border:1px solid #575757;border-radius:3px;box-shadow:0 0 0 1px #282828"><svg width="24" height="20" style="position:absolute;left:0;top:0"><path d="M7 2.6 L14.6 2.6 L18 6.2 L18 16.2 Q18 17.2 17 17.2 L7 17.2 Q6 17.2 6 16.2 L6 3.6 Q6 2.6 7 2.6 Z" fill="#6c6c6c"/><path d="M12 7.8 L8 11.8 L10.8 11.8 L10.8 15 L13.2 15 L13.2 11.8 L16 11.8 Z" fill="#2a2a2a"/></svg></div>
<div class="rb" style="left:1428px;top:355px">R</div>
<div class="t" style="right:235px;top:425px;">Scale Ratio</div>
<div class="fd" style="left:1239px;top:425px;width:192px"><span>1.000</span></div>
<div class="rb" style="left:1437px;top:428px">R</div>
<div class="t" style="right:235px;top:450px;">UV Repeat</div>
<div class="fd" style="left:1239px;top:450px;width:192px"><span>1.000</span></div>
<div class="rb" style="left:1437px;top:453px">R</div>
<div class="t" style="right:235px;top:475px;">U Scale</div>
<div class="fd" style="left:1239px;top:475px;width:192px"><span>1.000</span></div>
<div class="rb" style="left:1437px;top:478px">R</div>
<div class="t" style="right:235px;top:500px;">V Scale</div>
<div class="fd" style="left:1239px;top:500px;width:192px"><span>1.000</span></div>
<div class="rb" style="left:1437px;top:503px">R</div>
<div class="t" style="right:235px;top:525px;">Rotation</div>
<div class="fd" style="left:1239px;top:525px;width:192px"><span>0.000</span></div>
<div class="rb" style="left:1437px;top:528px">R</div>
<div class="t" style="right:235px;top:550px;">Seed</div>
<div class="fd" style="left:1239px;top:550px;width:67px"><span>0.000</span></div>
<div class="gr" style="left:1311px;top:557px;width:119px"></div>
<div class="hd" style="left:1311px;top:554px"></div>
<div class="rb" style="left:1437px;top:553px">R</div>
<div class="t" style="right:235px;top:572px;">Triplanar Mode</div>
<div class="cb" style="left:1239px;top:574px"></div>
<div class="rb" style="left:1437px;top:575px">R</div>
<div class="t" style="right:235px;top:594px;">Triplanar Scale</div>
<div class="fd" style="left:1239px;top:594px;width:192px"><span>1000.000</span></div>
<div class="rb" style="left:1437px;top:597px">R</div>
<div class="t" style="right:235px;top:623px;">Triplanar Contrast</div>
<div class="a" style="left:1239px;top:618px;width:159px;height:30px;background:linear-gradient(to right,#000 0%,#fff 100%)"></div>
<div class="a" style="left:1404px;top:622px;width:26px;height:22px;background:linear-gradient(#414141,#393939);border:1px solid #575757;border-radius:3px;box-shadow:0 0 0 1px #282828"><svg width="24" height="20" style="position:absolute;left:0;top:0"><path d="M5.6 16 Q8.5 6.5 17.6 3.6 M5.6 16 Q10.5 9.2 17.6 7.8 M5.6 16 Q11 12.6 17.6 12.2" stroke="#777" stroke-width="1.4" fill="none" stroke-linecap="round"/><path d="M4.8 16.6 L6.2 13 L8.6 15.4 Z" fill="#777"/></svg></div>
<div class="rb" style="left:1437px;top:626px">R</div>
<div class="t" style="right:235px;top:652px;">Triplanar Jitter Intensity</div>
<div class="fd" style="left:1239px;top:652px;width:67px"><span>0.000</span></div>
<div class="gr" style="left:1311px;top:659px;width:119px"></div>
<div class="hd" style="left:1311px;top:656px"></div>
<div class="rb" style="left:1437px;top:655px">R</div>
<div class="t" style="right:235px;top:677px;">Triplanar Jitter Size</div>
<div class="fd" style="left:1239px;top:677px;width:192px"><span>1.000</span></div>
<div class="rb" style="left:1437px;top:680px">R</div>
<div class="t" style="right:235px;top:699px;">Triplanar Fill Color</div>
<svg class="a" style="position:absolute;left:1239px;top:701px" width="176" height="16"><defs><pattern id="ck2" x="4" width="8" height="8" patternUnits="userSpaceOnUse"><rect width="8" height="8" fill="#5e5e5e"/><rect width="4" height="4" fill="#a2a2a2"/><rect x="4" y="4" width="4" height="4" fill="#a2a2a2"/></pattern></defs><rect width="176" height="16" fill="#000"/><path d="M0 16 L176 0 L176 16 Z" fill="url(#ck2)" shape-rendering="crispEdges"/></svg>
<div class="a" style="left:1421px;top:702px;width:14px;height:14px;background:#404040;border:1px solid #575757;border-radius:3px;box-shadow:0 0 0 1px #282828"><svg width="14" height="14" style="position:absolute;left:-1px;top:-1px"><path d="M7.2 1.2 L13.4 13 L1 13 Z" fill="#8c8c8c"/><path d="M4.1 7.1 L1 13 L7.2 13 Z" fill="#808080"/><path d="M10.3 7.1 L13.4 13 L7.2 13 Z" fill="#bdbdbd"/><circle cx="7" cy="9" r="2.6" fill="#fafafa"/></svg></div>
<div class="rb" style="left:1437px;top:702px">R</div>
<div class="a" style="left:1062px;top:2px;width:393px;height:1px;background:#5a5a5a"></div>
<div class="gb" style="left:1062px;top:729px;width:404px;height:334px;"></div>
<div class="tri" style="left:1065px;top:735px"></div>
<div class="t" style="left:1078px;top:728px;">Directional Gradient</div>
<div class="t" style="right:234px;top:748px;">Activate Directional Gradient</div>
<div class="cb" style="left:1240px;top:750px"></div>
<div class="rb" style="left:1447px;top:751px">R</div>
<div class="t" style="right:234px;top:770px;">Opacity</div>
<div class="fd" style="left:1240px;top:770px;width:67px"><span>1.000</span></div>
<div class="gr" style="left:1312px;top:777px;width:128px"></div>
<div class="gf" style="left:1313px;top:778px;width:116px"></div>
<div class="hd" style="left:1428px;top:774px"></div>
<div class="rb" style="left:1447px;top:773px">R</div>
<div class="t" style="right:234px;top:795px;">Blend Mode</div>
<div class="dd" style="left:1241px;top:795px;width:199px"><span>Add</span><i></i></div>
<div class="rb" style="left:1447px;top:798px">R</div>
<div class="t" style="right:234px;top:817px;">Invert</div>
<div class="cb" style="left:1240px;top:819px"></div>
<div class="rb" style="left:1447px;top:820px">R</div>
<div class="t" style="right:234px;top:839px;">Balance</div>
<div class="fd" style="left:1240px;top:839px;width:67px"><span>0.500</span></div>
<div class="gr" style="left:1312px;top:846px;width:128px"></div>
<div class="gf" style="left:1313px;top:847px;width:77px"></div>
<div class="hd" style="left:1389px;top:843px"></div>
<div class="rb" style="left:1447px;top:842px">R</div>
<div class="t" style="right:234px;top:864px;">Contrast</div>
<div class="fd" style="left:1240px;top:864px;width:67px"><span>0.000</span></div>
<div class="gr" style="left:1312px;top:871px;width:128px"></div>
<div class="hd" style="left:1312px;top:868px"></div>
<div class="rb" style="left:1447px;top:867px">R</div>
<div class="t" style="right:234px;top:889px;">Brightness</div>
<div class="fd" style="left:1240px;top:889px;width:67px"><span>0.000</span></div>
<div class="gr" style="left:1312px;top:896px;width:128px"></div>
<div class="gf" style="left:1313px;top:897px;width:58px"></div>
<div class="hd" style="left:1370px;top:893px"></div>
<div class="rb" style="left:1447px;top:892px">R</div>
<div class="t" style="right:234px;top:914px;">Top to Bottom</div>
<div class="fd" style="left:1240px;top:914px;width:67px"><span>1.000</span></div>
<div class="gr" style="left:1312px;top:921px;width:128px"></div>
<div class="gf" style="left:1313px;top:922px;width:116px"></div>
<div class="hd" style="left:1428px;top:918px"></div>
<div class="rb" style="left:1447px;top:917px">R</div>
<div class="t" style="right:234px;top:939px;">Top to Bottom Blend</div>
<div class="dd" style="left:1241px;top:939px;width:199px"><span>Add</span><i></i></div>
<div class="rb" style="left:1447px;top:942px">R</div>
<div class="t" style="right:234px;top:964px;">Back to Front</div>
<div class="fd" style="left:1240px;top:964px;width:67px"><span>0.000</span></div>
<div class="gr" style="left:1312px;top:971px;width:128px"></div>
<div class="hd" style="left:1312px;top:968px"></div>
<div class="rb" style="left:1447px;top:967px">R</div>
<div class="t" style="right:234px;top:989px;">Back to Front Blend</div>
<div class="dd" style="left:1241px;top:989px;width:199px"><span>Add</span><i></i></div>
<div class="rb" style="left:1447px;top:992px">R</div>
<div class="t" style="right:234px;top:1014px;">Left to Right</div>
<div class="fd" style="left:1240px;top:1014px;width:67px"><span>0.000</span></div>
<div class="gr" style="left:1312px;top:1021px;width:128px"></div>
<div class="hd" style="left:1312px;top:1018px"></div>
<div class="rb" style="left:1447px;top:1017px">R</div>
<div class="t" style="right:234px;top:1039px;">Left to Right Blend</div>
<div class="dd" style="left:1241px;top:1039px;width:199px"><span>Add</span><i></i></div>
<div class="rb" style="left:1447px;top:1042px">R</div>
<div class="gb" style="left:1062px;top:1067px;width:404px;height:184px;"></div>
<div class="tri" style="left:1065px;top:1073px"></div>
<div class="t" style="left:1078px;top:1066px;">Thickness</div>
<div class="t" style="right:234px;top:1085px;">Activate Thickness</div>
<div class="cb" style="left:1240px;top:1087px"></div>
<div class="rb" style="left:1447px;top:1088px">R</div>
<div class="t" style="right:234px;top:1107px;">Amount</div>
<div class="fd" style="left:1240px;top:1107px;width:67px"><span>1.000</span></div>
<div class="gr" style="left:1312px;top:1114px;width:128px"></div>
<div class="gf" style="left:1313px;top:1115px;width:116px"></div>
<div class="hd" style="left:1428px;top:1111px"></div>
<div class="rb" style="left:1447px;top:1110px">R</div>
<div class="t" style="right:234px;top:1132px;">Mode</div>
<div class="dd" style="left:1241px;top:1132px;width:199px"><span>Add</span><i></i></div>
<div class="rb" style="left:1447px;top:1135px">R</div>
<div class="t" style="right:234px;top:1154px;">Invert</div>
<div class="cb" style="left:1240px;top:1156px"></div>
<div class="rb" style="left:1447px;top:1157px">R</div>
<div class="t" style="right:234px;top:1176px;">Balance</div>
<div class="fd" style="left:1240px;top:1176px;width:67px"><span>0.500</span></div>
<div class="gr" style="left:1312px;top:1183px;width:128px"></div>
<div class="gf" style="left:1313px;top:1184px;width:58px"></div>
<div class="hd" style="left:1370px;top:1180px"></div>
<div class="rb" style="left:1447px;top:1179px">R</div>
<div class="t" style="right:234px;top:1201px;">Contrast</div>
<div class="fd" style="left:1240px;top:1201px;width:67px"><span>0.000</span></div>
<div class="gr" style="left:1312px;top:1208px;width:128px"></div>
<div class="hd" style="left:1312px;top:1205px"></div>
<div class="rb" style="left:1447px;top:1204px">R</div>
<div class="t" style="right:234px;top:1226px;">Brightness</div>
<div class="fd" style="left:1240px;top:1226px;width:67px"><span>0.000</span></div>
<div class="gr" style="left:1312px;top:1233px;width:128px"></div>
<div class="gf" style="left:1313px;top:1234px;width:58px"></div>
<div class="hd" style="left:1370px;top:1230px"></div>
<div class="rb" style="left:1447px;top:1229px">R</div>
<div class="gb" style="left:1062px;top:1255px;width:404px;height:39px;border-bottom:none;border-radius:3px 3px 0 0;box-shadow:none"></div>
<div class="tri" style="left:1065px;top:1261px"></div>
<div class="t" style="left:1078px;top:1254px;">Base Color</div>
<div class="t" style="right:234px;top:1273px;">Color</div>
<div class="a" style="left:1240px;top:1275px;width:185px;height:16px;background:#000"></div>
<div class="a" style="left:1431px;top:1276px;width:14px;height:14px;background:#3a3a3a;border:1px solid #575757;border-radius:3px;box-shadow:0 0 0 1px #282828"><svg width="14" height="14" style="position:absolute;left:-1px;top:-1px"><path d="M7.2 1.2 L13.4 13 L1 13 Z" fill="#8c8c8c"/><path d="M4.1 7.1 L1 13 L7.2 13 Z" fill="#808080"/><path d="M10.3 7.1 L13.4 13 L7.2 13 Z" fill="#bdbdbd"/><circle cx="7" cy="9" r="2.6" fill="#fafafa"/></svg></div>
<div class="rb" style="left:1447px;top:1276px">R</div>
<div class="a" style="left:255px;top:57px;width:2px;height:1155px;background:#5a5a5a"></div>
<div class="a" style="left:666px;top:2px;width:2px;height:1427px;background:#5a5a5a"></div>
<div class="a" style="left:665px;top:2px;width:1px;height:1427px;background:#262626"></div>
<div class="a" style="left:1061px;top:7px;width:2px;height:1287px;background:#5a5a5a"></div>
</body></html>
